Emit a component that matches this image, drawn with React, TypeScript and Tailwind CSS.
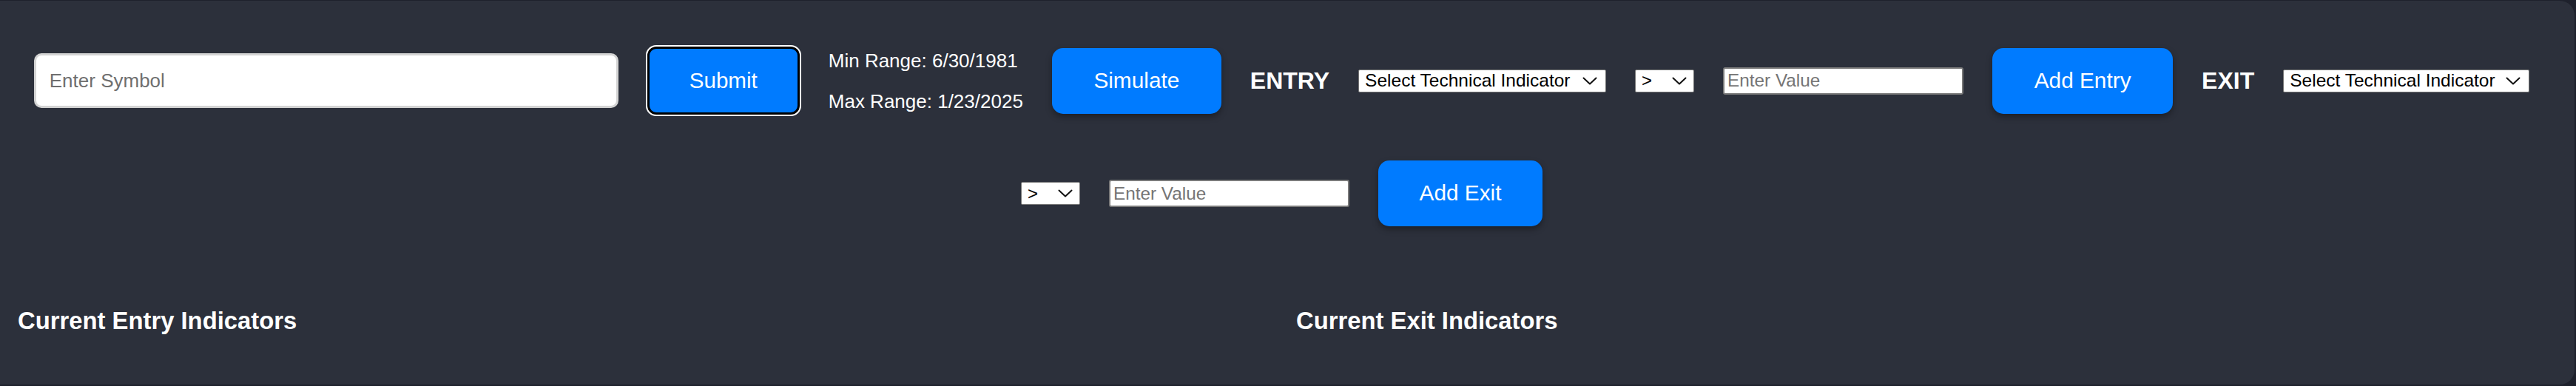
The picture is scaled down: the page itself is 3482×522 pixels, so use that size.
import React from "react";

const Chevron = () => (
  <svg
    width="20"
    height="11"
    viewBox="0 0 20 11"
    className="pointer-events-none absolute top-1/2 -translate-y-1/2"
    fill="none"
    stroke="#111"
    strokeWidth="2"
    strokeLinecap="round"
    strokeLinejoin="round"
  >
    <polyline points="1.5,1.5 10,9.5 18.5,1.5" />
  </svg>
);

const IndicatorSelect = ({ w }: { w: string }) => (
  <div className={`relative ${w} h-[31px]`}>
    <select
      defaultValue=""
      className="h-full w-full appearance-none rounded-[2px] border border-[#767676] bg-white pl-[8px] pr-[36px] text-[24.5px] leading-none text-black outline-none"
    >
      <option value="">Select Technical Indicator</option>
      <option value="sma">SMA</option>
      <option value="ema">EMA</option>
      <option value="rsi">RSI</option>
    </select>
    <span className="pointer-events-none absolute right-[12px] top-1/2 block h-[11px] w-[20px] -translate-y-1/2">
      <Chevron />
    </span>
  </div>
);

const OpSelect = () => (
  <div className="relative h-[31px] w-[80px]">
    <select
      defaultValue=">"
      className="h-full w-full appearance-none rounded-[2px] border border-[#767676] bg-white pl-[8px] pr-[30px] text-[24px] leading-none text-black outline-none"
    >
      <option value=">">&gt;</option>
      <option value="<">&lt;</option>
      <option value="=">=</option>
    </select>
    <span className="pointer-events-none absolute right-[10px] top-1/2 block h-[11px] w-[20px] -translate-y-1/2">
      <Chevron />
    </span>
  </div>
);

const ValueInput = () => (
  <input
    type="text"
    placeholder="Enter Value"
    className="h-[37px] w-[325px] rounded-[3px] border-2 border-[#7a7a7a] bg-white px-[4px] text-[24.3px] text-black outline-none placeholder:text-[#757575]"
  />
);

const BlueButton = ({ label, w }: { label: string; w: string }) => (
  <button
    type="button"
    className={`${w} h-[89px] rounded-[15px] bg-[#007bff] text-[29.8px] text-white shadow-[0_4px_8px_rgba(0,0,0,0.35)]`}
  >
    {label}
  </button>
);

export default function App() {
  return (
    <div
      className="h-[522px] w-full bg-[#1e212c] pb-[2px] pr-[2px] pt-[1px]"
      style={{ fontFamily: '"Liberation Sans", Arial, sans-serif' }}
    >
      <div className="flex h-full flex-col rounded-r-[20px] bg-[#2c303b]">
        <div className="flex flex-wrap items-center justify-center gap-x-[39px] gap-y-[62px] pr-[15px] pt-[62px]">
          <input
            type="text"
            placeholder="Enter Symbol"
            className="h-[74px] w-[790px] rounded-[10px] border-[3px] border-[#d4d4d4] bg-white px-[18px] text-[26px] text-black outline-none placeholder:text-[#6f6f6f]"
          />
          <button
            type="button"
            className="h-[92px] w-[206px] rounded-[12px] border-[3px] border-black bg-[#007bff] text-[29.6px] text-white outline outline-2 outline-white"
          >
            Submit
          </button>
          <div className="flex flex-col gap-[25px] text-[26px] leading-[30px] text-white">
            <span>Min Range: 6/30/1981</span>
            <span>Max Range: 1/23/2025</span>
          </div>
          <BlueButton label="Simulate" w="w-[229px]" />
          <span className="text-[32px] font-bold leading-none text-white">ENTRY</span>
          <IndicatorSelect w="w-[335px]" />
          <OpSelect />
          <ValueInput />
          <BlueButton label="Add Entry" w="w-[244px]" />
          <span className="text-[32px] font-bold leading-none text-white">EXIT</span>
          <IndicatorSelect w="w-[333px]" />
          <OpSelect />
          <ValueInput />
          <BlueButton label="Add Exit" w="w-[222px]" />
        </div>
        <div className="mt-[109px] grid grid-cols-2 gap-[24px] px-[24px]">
          <h3 className="text-[32.8px] font-bold leading-[38px] text-white">Current Entry Indicators</h3>
          <h3 className="text-[32.8px] font-bold leading-[38px] text-white">Current Exit Indicators</h3>
        </div>
      </div>
    </div>
  );
}
